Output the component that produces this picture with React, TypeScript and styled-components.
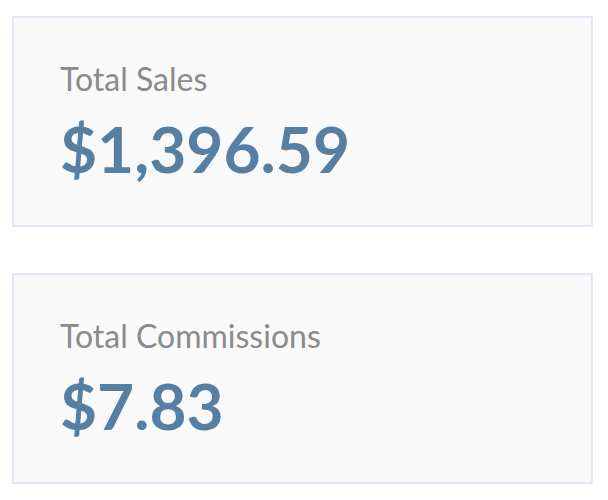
import styled, { createGlobalStyle } from "styled-components";

const GlobalStyle = createGlobalStyle`
  body {
    margin: 0;
    background: #ffffff;
    font-family: Lato, "Open Sans", sans-serif;
  }
`;

const Page = styled.div`
  display: flex;
  flex-direction: column;
  gap: 46px;
  padding: 16px 15px 16px 12px;
`;

const Card = styled.div`
  box-sizing: border-box;
  height: 211px;
  padding: 42px 46px;
  background: #f9f9fa;
  border: 2px solid #e1e7f3;
  display: flex;
  flex-direction: column;
`;

const Label = styled.div`
  font-size: 32px;
  line-height: 38px;
  color: #8a8b8d;
  font-weight: 400;
`;

const Value = styled.div`
  margin-top: 15px;
  font-size: 64px;
  line-height: 72px;
  font-weight: 700;
  color: #5580a4;
`;

const stats = [
  { label: "Total Sales", value: "$1,396.59" },
  { label: "Total Commissions", value: "$7.83" },
];

export default function App() {
  return (
    <>
      <GlobalStyle />
      <Page>
        {stats.map((s) => (
          <Card key={s.label}>
            <Label>{s.label}</Label>
            <Value>{s.value}</Value>
          </Card>
        ))}
      </Page>
    </>
  );
}
